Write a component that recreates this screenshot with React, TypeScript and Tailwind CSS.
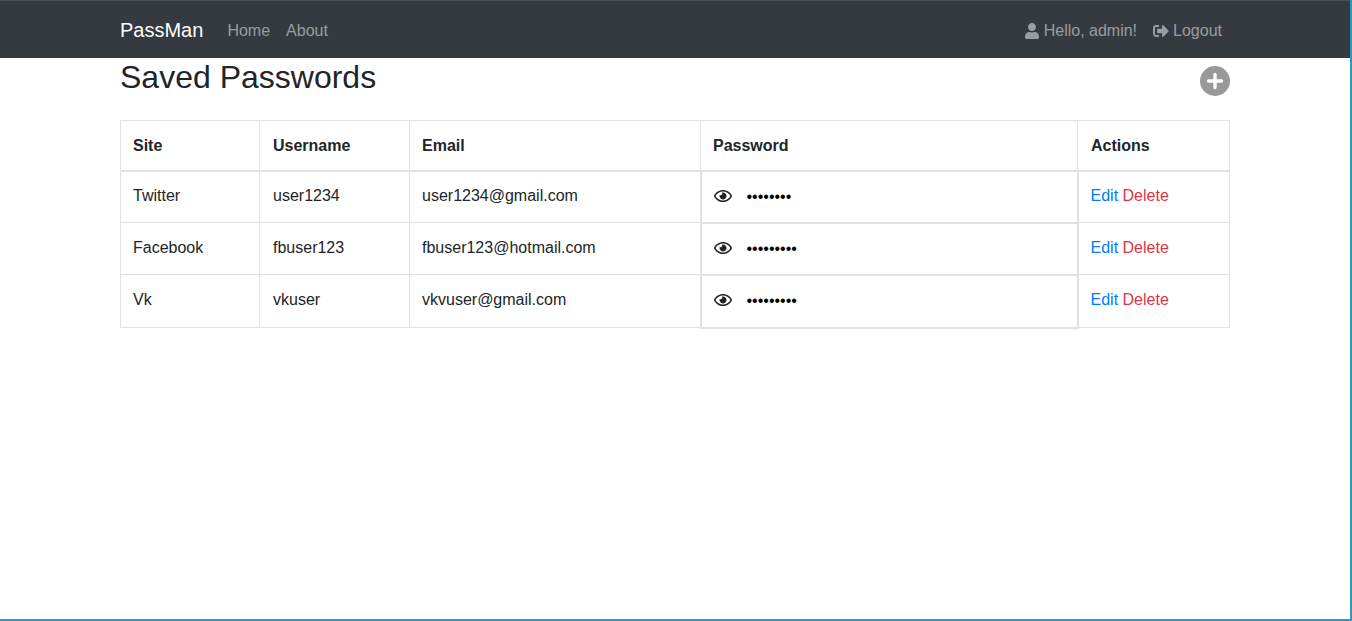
import { FaUser, FaSignOutAlt, FaRegEye } from "react-icons/fa";

interface Entry {
    site: string;
    username: string;
    email: string;
    password: string;
}

const ENTRIES: Entry[] = [
    { site: "Twitter", username: "user1234", email: "user1234@gmail.com", password: "••••••••" },
    { site: "Facebook", username: "fbuser123", email: "fbuser123@hotmail.com", password: "•••••••••" },
    { site: "Vk", username: "vkuser", email: "vkvuser@gmail.com", password: "•••••••••" },
];

export default function App() {
    return (
        <div className="h-[621px] overflow-hidden bg-white border-r-2 border-b-2 border-[#2b9ac4] font-['Liberation_Sans',Arial,sans-serif] text-base leading-6 text-[#212529]">
            <nav className="h-[58px] bg-[#343a40] border-t border-[#4a4f5a] px-[120px] flex items-center">
                <span className="text-xl text-white mr-6">PassMan</span>
                <a className="text-white/50 mr-4 pt-[2px]">Home</a>
                <a className="text-white/50 pt-[2px]">About</a>
                <div className="ml-auto flex items-center pr-2 pt-[2px] text-white/50">
                    <span className="flex items-center mr-4">
                        <FaUser className="w-[14px] h-4 mr-[4.5px]" />
                        Hello, admin!
                    </span>
                    <span className="flex items-center">
                        <FaSignOutAlt className="w-4 h-4 mr-1" />
                        Logout
                    </span>
                </div>
            </nav>

            <main className="w-[1110px] ml-[120px]">
                <div className="flex justify-between h-[62px]">
                    <h2 className="text-[32px] leading-[38px] font-normal">Saved Passwords</h2>
                    <svg viewBox="0 0 30 30" className="w-[30px] h-[30px] mt-2">
                        <circle cx="15" cy="15" r="15" fill="#999999" />
                        <path d="M15 8.5v13M8.5 15h13" stroke="#ffffff" strokeWidth="3.4" strokeLinecap="round" />
                    </svg>
                </div>

                <table className="w-[1109px] table-fixed border-collapse border border-[#dee2e6] text-left">
                    <colgroup>
                        <col className="w-[139px]" />
                        <col className="w-[150px]" />
                        <col className="w-[291px]" />
                        <col className="w-[377px]" />
                        <col className="w-[152px]" />
                    </colgroup>
                    <thead>
                        <tr className="h-[50px] font-bold">
                            <th className="px-3 pt-[13px] align-top border border-[#dee2e6] border-b-2">Site</th>
                            <th className="pl-[13px] pr-3 pt-[13px] align-top border border-[#dee2e6] border-b-2">Username</th>
                            <th className="px-3 pt-[13px] align-top border border-[#dee2e6] border-b-2">Email</th>
                            <th className="px-3 pt-[13px] align-top border border-[#dee2e6] border-b-2">Password</th>
                            <th className="pl-[13px] pr-3 pt-[13px] align-top border border-[#dee2e6] border-b-2">Actions</th>
                        </tr>
                    </thead>
                    <tbody>
                        {ENTRIES.map((entry, i) => {
                            const pad = i === 0 ? "pt-3" : "pt-[13px]";
                            return (
                                <tr key={entry.site} className="h-[52px] last:h-[53px]">
                                    <td className={`px-3 ${pad} align-top border border-[#dee2e6]`}>{entry.site}</td>
                                    <td className={`pl-[13px] pr-3 ${pad} align-top border border-[#dee2e6]`}>{entry.username}</td>
                                    <td className={`px-3 ${pad} align-top border border-[#dee2e6]`}>{entry.email}</td>
                                    <td className="px-3 pt-3 align-top border-2 border-[#dee2e6]">
                                        <div className="flex items-center h-6 pt-0.5 text-black">
                                            <FaRegEye className="w-[18px] h-4 mb-[2px] mr-[15px] text-[#212529]" />
                                            {entry.password}
                                        </div>
                                    </td>
                                    <td className={`px-3 ${pad} align-top border border-[#dee2e6]`}>
                                        <a className="text-[#007bff]">Edit</a> <a className="text-[#dc3545]">Delete</a>
                                    </td>
                                </tr>
                            );
                        })}
                    </tbody>
                </table>
            </main>
        </div>
    );
}
